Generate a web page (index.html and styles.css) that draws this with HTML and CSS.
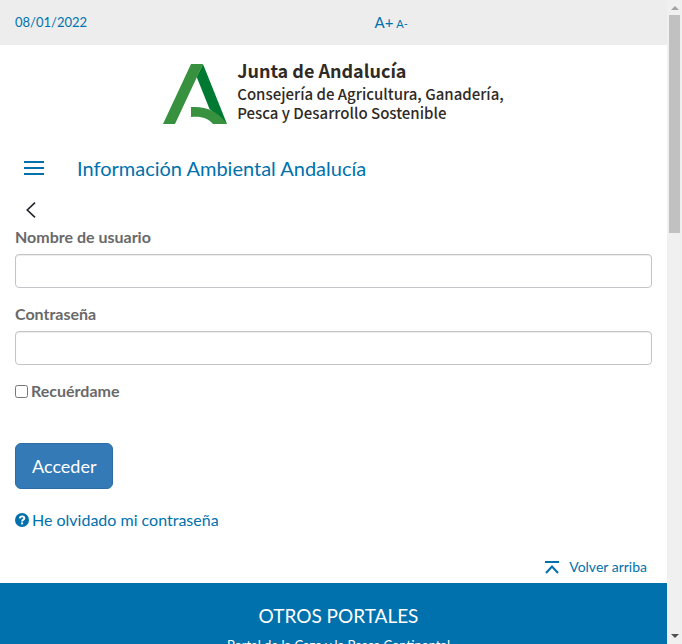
FILE: index.html
```html
<!DOCTYPE html>
<html lang="es">
<head>
<meta charset="utf-8">
<meta name="viewport" content="width=device-width, initial-scale=1">
<title>Información Ambiental Andalucía</title>
<link rel="stylesheet" href="styles.css">
</head>
<body>
<div class="page">
  <div class="topbar">
    <time class="date" datetime="2022-01-08">08/01/2022</time>
    <div class="text-size">
      <a class="larger" href="#">A+</a>
      <a class="smaller" href="#">A-</a>
    </div>
  </div>

  <header class="brand">
    <svg class="brand-mark" viewBox="0 0 64 60" aria-hidden="true">
      <path fill="#007a33" d="M40 0 64 60 46.500 45 33.700 13Z"/>
      <path fill="#38913f" d="M28 0H40L12 60H0Z"/>
      <path fill="#38913f" d="M28 43C43 42 55 47 64 60H50C45 54 38 52 28 53Z"/>
    </svg>
    <div class="brand-text">
      <strong>Junta de Andalucía</strong>
      <span>Consejería de Agricultura, Ganadería,</span>
      <span>Pesca y Desarrollo Sostenible</span>
    </div>
  </header>

  <nav class="site-nav">
    <button class="menu" type="button" aria-label="Menú"><i></i><i></i><i></i></button>
    <a class="site-title" href="#">Información Ambiental Andalucía</a>
  </nav>

  <main class="content">
    <a class="back" href="#" aria-label="Volver">
      <svg viewBox="0 0 10 16" aria-hidden="true"><path d="M9 .7 1.3 8 9 15.3" fill="none" stroke="#272833" stroke-width="1.7"/></svg>
    </a>
    <form class="login">
      <div class="field">
        <label for="user">Nombre de usuario</label>
        <input id="user" type="text">
      </div>
      <div class="field">
        <label for="pass">Contraseña</label>
        <input id="pass" type="password">
      </div>
      <div class="remember">
        <input id="remember" type="checkbox">
        <label for="remember">Recuérdame</label>
      </div>
      <button class="submit" type="submit">Acceder</button>
    </form>
    <a class="forgot" href="#">
      <svg viewBox="0 0 14 14" aria-hidden="true">
        <circle cx="7" cy="7" r="7" fill="#0071ad"/>
        <path d="M4.800 5.300C5 3.900 6 3.400 7.100 3.400 8.400 3.400 9.300 4.200 9.300 5.200 9.300 6.700 7.100 6.600 7.100 8.400" fill="none" stroke="#fff" stroke-width="1.900"/>
        <path d="M6.100 9.400h2v2h-2z" fill="#fff"/>
      </svg>
      <span>He olvidado mi contraseña</span>
    </a>
  </main>

  <div class="to-top">
    <a href="#">
      <svg viewBox="0 0 14 13" aria-hidden="true">
        <path d="M0 1H14M1 12 7 5.500 13 12" fill="none" stroke="#0071ad" stroke-width="2"/>
      </svg>
      <span>Volver arriba</span>
    </a>
  </div>

  <footer class="portals">
    <h2>OTROS PORTALES</h2>
    <a href="#">Portal de la Caza y la Pesca Continental</a>
  </footer>
</div>
<div class="scrollbar" aria-hidden="true">
  <span class="arrow-up"></span>
  <span class="thumb"></span>
  <span class="arrow-down"></span>
</div>
</body>
</html>
```
FILE: styles.css
```css
* {
  box-sizing: border-box;
}

body {
  display: flex;
  height: 100vh;
  margin: 0;
  overflow: hidden;
  background: #fff;
  color: #696969;
  font: 16px/24px Lato, "Liberation Sans", sans-serif;
}

a {
  color: #0071ad;
  text-decoration: none;
}

svg {
  display: block;
  flex: none;
}

.page {
  flex: 1;
  min-width: 0;
  height: 100%;
  overflow: hidden;
}

.topbar {
  display: grid;
  grid-template-columns: 1fr 1fr;
  padding: 10px 15px 9px;
  background: #ededed;
  color: #0071ad;
}

.date {
  font-size: 13px;
}

.text-size {
  display: flex;
  gap: 3px;
  align-items: baseline;
  padding-left: 41px;
  font-size: 15px;
}

.smaller {
  font-size: 11px;
}

.brand {
  display: flex;
  justify-content: center;
  gap: 10px;
  padding: 13px 0 16px;
}

.brand-mark {
  width: 64px;
  height: 60px;
  margin-top: 6px;
}

.brand-text {
  display: flex;
  flex-direction: column;
  color: #2f2a26;
  font: 500 15px/19px "Noto Sans CJK SC", "Noto Sans", sans-serif;
}

.brand-text strong {
  margin-bottom: 2px;
  font-size: 18px;
  line-height: 24px;
  font-weight: 700;
}

.site-nav {
  display: flex;
  align-items: center;
  gap: 33px;
  padding: 14px 24px;
}

.menu {
  display: flex;
  flex-direction: column;
  gap: 4px;
  width: 20px;
  padding: 0;
  border: 0;
  background: none;
}

.menu i {
  width: 100%;
  height: 2px;
  background: #0071ad;
}

.site-title {
  font-size: 20px;
  line-height: 28px;
}

.content {
  padding: 0 15px;
}

.back {
  display: block;
  width: 30px;
  padding: 6px 10px 7px 11px;
}

.back svg {
  width: 10px;
  height: 16px;
}

.field {
  margin-bottom: 14px;
}

label {
  font-weight: 700;
}

.field label {
  display: block;
  margin-bottom: 5px;
}

.field input {
  display: block;
  width: 100%;
  height: 34px;
  padding: 6px 12px;
  border: 1px solid #c4c4c8;
  border-radius: 4px;
  box-shadow: inset 0 1px 1px #00000013;
  font: inherit;
}

.remember {
  display: flex;
  align-items: center;
  gap: 3px;
}

.remember input {
  width: 13px;
  height: 13px;
  margin: 0;
}

.submit {
  display: block;
  margin: 40px 0 19px;
  padding: 10px 16px;
  border: 1px solid #2e6da4;
  border-radius: 6px;
  background: #337ab7;
  color: #fff;
  font: 18px/24px Lato, "Liberation Sans", sans-serif;
}

.forgot {
  display: flex;
  align-items: center;
  gap: 3px;
}

.forgot svg {
  width: 14px;
  height: 14px;
}

.to-top {
  display: flex;
  justify-content: flex-end;
  padding: 23px 20px 4px;
  font-size: 14px;
}

.to-top a {
  display: flex;
  align-items: center;
  gap: 10px;
}

.to-top svg {
  width: 14px;
  height: 13px;
}

.portals {
  padding: 21px 15px 20px 25px;
  background: #0071ad;
  color: #fff;
  text-align: center;
}

.portals h2 {
  margin: 0 0 5px;
  font-size: 19px;
  font-weight: 400;
  line-height: 24px;
}

.portals a {
  display: block;
  color: #fff;
  font-size: 13px;
  line-height: 24px;
}

.scrollbar {
  display: flex;
  flex-direction: column;
  align-items: center;
  width: 15px;
  padding: 6px 0;
  background: #f0f0f0;
}

.arrow-up,
.arrow-down {
  border: 4px solid transparent;
}

.arrow-up {
  border-top: 0;
  border-bottom-color: #a3a3a3;
}

.arrow-down {
  margin-top: auto;
  border-bottom: 0;
  border-top-color: #505050;
}

.thumb {
  width: 11px;
  height: 34.5%;
  margin-top: 5px;
  background: #c1c1c1;
}
```
